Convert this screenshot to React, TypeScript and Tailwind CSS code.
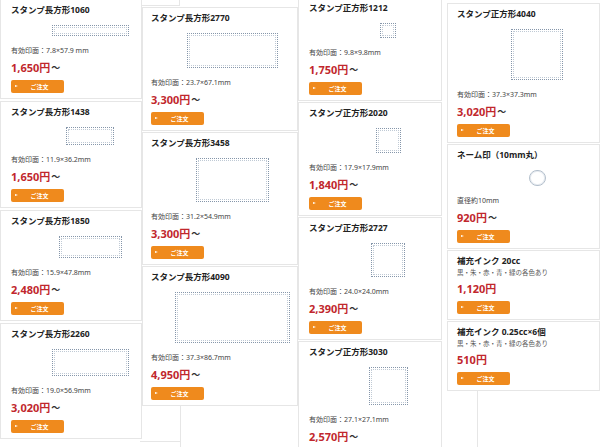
import React from 'react';

type Item = {
  title: string;
  spec?: string;
  sub?: string;
  price: string;
  from?: boolean;
  img?: { w: number; h: number; round?: boolean };
};

interface ColumnProps {
  items: Item[];
  width: string;
  pad: number;
  top: string;
  gap: string;
}

const FONT = { fontFamily: '"Noto Sans", "Noto Sans CJK JP", sans-serif' };

// image centre sits ~90px from each card's left border
const IMG_CENTER = 90;

const Stamp: React.FC<{ w: number; h: number; round?: boolean; pad: number }> = ({ w, h, round, pad }) => (
  <div className="mt-[8px] flex" style={{ marginLeft: IMG_CENTER - 1 - pad - w / 2 }}>
    {round ? (
      <div className="rounded-full border-[1.5px] border-[#b3bfcc] bg-white shadow-[inset_0_0_0_1px_#e8ecf1]" style={{ width: w, height: h }} />
    ) : (
      <div className="border border-dotted border-[#8596aa] bg-white p-[1px]" style={{ width: w, height: h }}>
        <div className="h-full w-full border border-dotted border-[#c0cad5]" />
      </div>
    )}
  </div>
);

const OrderButton = () => (
  <button className="relative mt-[4px] flex h-[13px] w-[53px] items-center rounded-[2px] bg-[#ef8a1d] text-white">
    <span className="absolute left-[4px] top-[5px] h-0 w-0 border-y-[1.5px] border-l-[3px] border-y-transparent border-l-white" />
    <span className="w-full pl-[4px] text-center text-[6px] font-bold leading-none">ご注文</span>
  </button>
);

const Card: React.FC<{ item: Item; pad: number }> = ({ item, pad }) => (
  <div className="border border-[#e6e6e6] bg-white pt-[3px] pb-[5px]" style={{ paddingLeft: pad }}>
    <h3 className="text-[8.5px] font-bold leading-[14px] text-[#222] whitespace-nowrap">{item.title}</h3>
    {item.sub && <p className="text-[6.5px] leading-[10px] text-[#555] whitespace-nowrap">{item.sub}</p>}
    {item.img && <Stamp {...item.img} pad={pad} />}
    {item.spec && <p className="mt-[10px] text-[7px] leading-[10px] text-[#444] whitespace-nowrap">{item.spec}</p>}
    <div className={`${item.sub ? 'mt-[3px]' : 'mt-[4px]'} flex items-center leading-[16px]`}>
      <span className="text-[11px] font-bold text-[#c1272d]">{item.price}</span>
      {item.from && <span className="ml-[1px] text-[9px] font-bold text-[#333]">〜</span>}
    </div>
    <OrderButton />
  </div>
);

const Column: React.FC<ColumnProps> = ({ items, width, pad, top, gap }) => (
  <div className={`flex shrink-0 flex-col ${gap} ${width} ${top}`}>
    {items.map((it) => (
      <Card key={it.title} item={it} pad={pad} />
    ))}
  </div>
);

const col1: Item[] = [
  { title: 'スタンプ長方形1060', spec: '有効印面：7.8×57.9 mm', price: '1,650円', from: true, img: { w: 77, h: 11 } },
  { title: 'スタンプ長方形1438', spec: '有効印面：11.9×36.2mm', price: '1,650円', from: true, img: { w: 48, h: 18 } },
  { title: 'スタンプ長方形1850', spec: '有効印面：15.9×47.8mm', price: '2,480円', from: true, img: { w: 63, h: 22 } },
  { title: 'スタンプ長方形2260', spec: '有効印面：19.0×56.9mm', price: '3,020円', from: true, img: { w: 77, h: 27 } },
];

const col2: Item[] = [
  { title: 'スタンプ長方形2770', spec: '有効印面：23.7×67.1mm', price: '3,300円', from: true, img: { w: 91, h: 35 } },
  { title: 'スタンプ長方形3458', spec: '有効印面：31.2×54.9mm', price: '3,300円', from: true, img: { w: 73, h: 44 } },
  { title: 'スタンプ長方形4090', spec: '有効印面：37.3×86.7mm', price: '4,950円', from: true, img: { w: 115, h: 51 } },
];

const col3: Item[] = [
  { title: 'スタンプ正方形1212', spec: '有効印面：9.8×9.8mm', price: '1,750円', from: true, img: { w: 16, h: 15 } },
  { title: 'スタンプ正方形2020', spec: '有効印面：17.9×17.9mm', price: '1,840円', from: true, img: { w: 25, h: 25 } },
  { title: 'スタンプ正方形2727', spec: '有効印面：24.0×24.0mm', price: '2,390円', from: true, img: { w: 34, h: 34 } },
  { title: 'スタンプ正方形3030', spec: '有効印面：27.1×27.1mm', price: '2,570円', from: true, img: { w: 39, h: 38 } },
];

const col4: Item[] = [
  { title: 'スタンプ正方形4040', spec: '有効印面：37.3×37.3mm', price: '3,020円', from: true, img: { w: 52, h: 51 } },
  { title: 'ネーム印（10mm丸）', spec: '直径約10mm', price: '920円', from: true, img: { w: 17, h: 16, round: true } },
  { title: '補充インク 20cc', sub: '黒・朱・赤・青・緑の各色あり', price: '1,120円' },
  { title: '補充インク 0.25cc×6個', sub: '黒・朱・赤・青・緑の各色あり', price: '510円' },
];

export default function App() {
  return (
    <div className="relative h-[447px] w-[600px] overflow-hidden bg-white" style={FONT}>
      {/* leftover outlines of cards behind the grid */}
      <div className="absolute left-[141px] top-[-10px] h-[16px] w-[39px] border border-[#e6e6e6]" />
      <div className="absolute left-[180px] top-[404px] h-[50px] w-px bg-[#e6e6e6]" />
      <div className="absolute left-[140px] top-[441px] h-px w-[40px] bg-[#e6e6e6]" />
      <div className="absolute left-[477px] top-[390px] h-[60px] w-px bg-[#e6e6e6]" />

      <div className="relative flex items-start">
        <Column items={col1} width="w-[142px]" pad={10} top="-mt-[1px]" gap="gap-[2px]" />
        <Column items={col2} width="w-[156px]" pad={8} top="mt-[7px]" gap="gap-[1px]" />
        <Column items={col3} width="w-[144px]" pad={10} top="-mt-[3px]" gap="gap-[1px]" />
        <Column items={col4} width="w-[153px] ml-[5px]" pad={9} top="mt-[3px]" gap="gap-[1px]" />
      </div>
    </div>
  );
}
